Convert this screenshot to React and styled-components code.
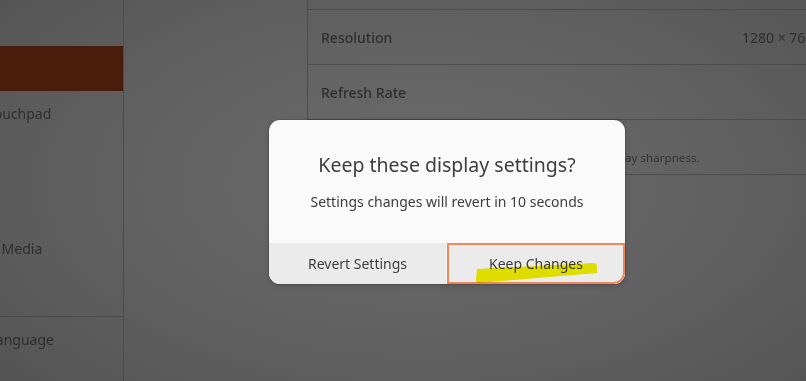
import React from "react";
import styled, { createGlobalStyle } from "styled-components";

const GlobalStyle = createGlobalStyle`
  html, body {
    margin: 0;
    padding: 0;
    background: #5c5c5c;
    font-family: "Noto Sans", "Open Sans", sans-serif;
  }
`;

const Screen = styled.div`
  position: relative;
  width: 806px;
  height: 381px;
  overflow: hidden;
  display: flex;
  background: radial-gradient(
    ellipse 75% 85% at 52% 48%,
    #6b6b6b 0%,
    #626262 45%,
    #525252 100%
  );
`;

const Sidebar = styled.nav`
  width: 123px;
  flex-shrink: 0;
  border-right: 1px solid #4c4c4c;
  overflow: hidden;
`;

const SidebarList = styled.div`
  margin-left: -87px;
  width: 210px;
  padding-top: 1px;
`;

const SidebarItem = styled.div`
  height: 45px;
  display: flex;
  align-items: center;
  padding-left: 12px;
  font-size: 14px;
  color: #2e2e2e;
  white-space: nowrap;
  background: ${(p) => (p.$selected ? "#4a1c0c" : "transparent")};
  border-top: ${(p) => (p.$separated ? "1px solid #4c4c4c" : "none")};
`;

const Content = styled.main`
  flex: 1;
  padding-left: 183px;
  overflow: hidden;
`;

const Panel = styled.div`
  margin-top: -45px;
  border-left: 1px solid #4c4c4c;
`;

const Row = styled.div`
  height: 54px;
  border-bottom: 1px solid #4c4c4c;
  display: grid;
  grid-template-columns: 421px auto;
  align-items: center;
  padding-left: 13px;
  white-space: nowrap;
`;

const RowText = styled.div`
  display: flex;
  flex-direction: column;
  gap: 2px;
`;

const RowTitle = styled.span`
  font-size: 14px;
  font-weight: 500;
  color: #2e2e2e;
`;

const RowSubtitle = styled.span`
  font-size: 11.6px;
  color: #333;
`;

const RowValue = styled.span`
  font-size: 14px;
  color: #2e2e2e;
`;

const Dialog = styled.div`
  position: absolute;
  left: 269px;
  top: 120px;
  width: 356px;
  height: 164px;
  border-radius: 11px;
  background: #fafafa;
  overflow: hidden;
  display: flex;
  flex-direction: column;
  box-shadow: 0 0 0 1px rgba(0, 0, 0, 0.12), 0 2px 6px rgba(0, 0, 0, 0.15);
`;

const DialogBody = styled.div`
  flex: 1;
  display: flex;
  flex-direction: column;
  align-items: center;
  padding-top: 31px;
  color: #3d3d3d;
`;

const DialogTitle = styled.h2`
  margin: 0;
  font-size: 19.5px;
  line-height: 28px;
  font-weight: 400;
`;

const DialogMessage = styled.p`
  margin: 13px 0 0;
  font-size: 14px;
  line-height: 20px;
`;

const ButtonRow = styled.div`
  height: 41px;
  display: grid;
  grid-template-columns: 177px 1px 1fr;
  background: #ebebeb;
`;

const Divider = styled.div`
  background: #f7f7f7;
`;

const DialogButton = styled.button`
  position: relative;
  border: 2px solid ${(p) => (p.$focused ? "#f0855e" : "transparent")};
  border-bottom-right-radius: ${(p) => (p.$focused ? "11px" : "0")};
  background: transparent;
  font-family: inherit;
  font-size: 14px;
  color: #3d3d3d;
  padding: 0;
  cursor: pointer;
`;

const Highlight = styled.svg`
  position: absolute;
  left: 24px;
  top: 14px;
  mix-blend-mode: multiply;
  pointer-events: none;
`;

export default function App() {
  return (
    <>
      <GlobalStyle />
      <Screen>
        <Sidebar>
          <SidebarList>
            <SidebarItem>Power</SidebarItem>
            <SidebarItem $selected>Displays</SidebarItem>
            <SidebarItem>Mouse &amp; Touchpad</SidebarItem>
            <SidebarItem>Keyboard</SidebarItem>
            <SidebarItem>Printers</SidebarItem>
            <SidebarItem>Removable Media</SidebarItem>
            <SidebarItem>Color</SidebarItem>
            <SidebarItem $separated>Region &amp; Language</SidebarItem>
          </SidebarList>
        </Sidebar>
        <Content>
          <Panel>
            <Row>
              <RowTitle>Orientation</RowTitle>
            </Row>
            <Row>
              <RowTitle>Resolution</RowTitle>
              <RowValue>1280 × 768 (15∶9)</RowValue>
            </Row>
            <Row>
              <RowTitle>Refresh Rate</RowTitle>
            </Row>
            <Row>
              <RowText>
                <RowTitle>Fractional Scaling</RowTitle>
                <RowSubtitle>
                  May increase power usage, lower speed, or reduce display sharpness.
                </RowSubtitle>
              </RowText>
            </Row>
          </Panel>
        </Content>
        <Dialog>
          <DialogBody>
            <DialogTitle>Keep these display settings?</DialogTitle>
            <DialogMessage>Settings changes will revert in 10 seconds</DialogMessage>
          </DialogBody>
          <ButtonRow>
            <DialogButton>Revert Settings</DialogButton>
            <Divider />
            <DialogButton $focused>
              Keep Changes
              <Highlight width="130" height="26" viewBox="0 0 130 26">
                <path
                  d="M4 10 L120 4 Q124 4 124 8 L124 14 L6 24 Q3 24 3 20 Z"
                  fill="#f2ef00"
                />
              </Highlight>
            </DialogButton>
          </ButtonRow>
        </Dialog>
      </Screen>
    </>
  );
}
